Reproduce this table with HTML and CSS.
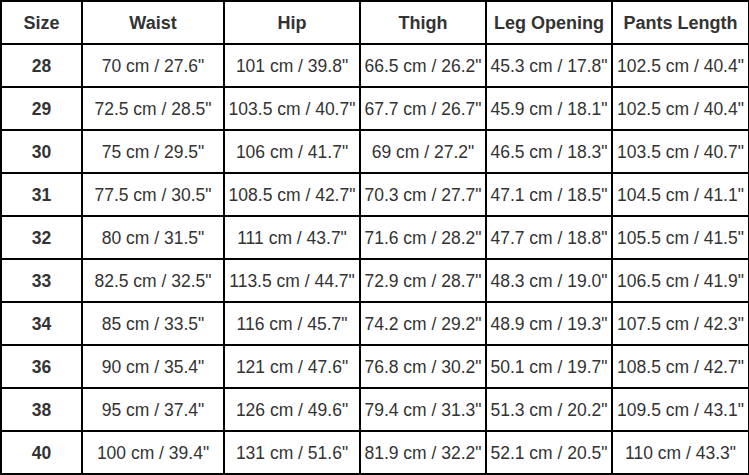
FILE: index.html
```html
<!DOCTYPE html>
<html>
<head>
<meta charset="utf-8">
<link rel="stylesheet" href="styles.css">
</head>
<body>
<table class="size-table">
  <colgroup>
    <col class="c1"><col class="c2"><col class="c3"><col class="c4"><col class="c5"><col class="c6">
  </colgroup>
  <thead>
    <tr><th>Size</th><th>Waist</th><th>Hip</th><th>Thigh</th><th>Leg Opening</th><th>Pants Length</th></tr>
  </thead>
  <tbody>
    <tr><th>28</th><td>70 cm / 27.6"</td><td>101 cm / 39.8"</td><td>66.5 cm / 26.2"</td><td>45.3 cm / 17.8"</td><td>102.5 cm / 40.4"</td></tr>
    <tr><th>29</th><td>72.5 cm / 28.5"</td><td>103.5 cm / 40.7"</td><td>67.7 cm / 26.7"</td><td>45.9 cm / 18.1"</td><td>102.5 cm / 40.4"</td></tr>
    <tr><th>30</th><td>75 cm / 29.5"</td><td>106 cm / 41.7"</td><td>69 cm / 27.2"</td><td>46.5 cm / 18.3"</td><td>103.5 cm / 40.7"</td></tr>
    <tr><th>31</th><td>77.5 cm / 30.5"</td><td>108.5 cm / 42.7"</td><td>70.3 cm / 27.7"</td><td>47.1 cm / 18.5"</td><td>104.5 cm / 41.1"</td></tr>
    <tr><th>32</th><td>80 cm / 31.5"</td><td>111 cm / 43.7"</td><td>71.6 cm / 28.2"</td><td>47.7 cm / 18.8"</td><td>105.5 cm / 41.5"</td></tr>
    <tr><th>33</th><td>82.5 cm / 32.5"</td><td>113.5 cm / 44.7"</td><td>72.9 cm / 28.7"</td><td>48.3 cm / 19.0"</td><td>106.5 cm / 41.9"</td></tr>
    <tr><th>34</th><td>85 cm / 33.5"</td><td>116 cm / 45.7"</td><td>74.2 cm / 29.2"</td><td>48.9 cm / 19.3"</td><td>107.5 cm / 42.3"</td></tr>
    <tr><th>36</th><td>90 cm / 35.4"</td><td>121 cm / 47.6"</td><td>76.8 cm / 30.2"</td><td>50.1 cm / 19.7"</td><td>108.5 cm / 42.7"</td></tr>
    <tr><th>38</th><td>95 cm / 37.4"</td><td>126 cm / 49.6"</td><td>79.4 cm / 31.3"</td><td>51.3 cm / 20.2"</td><td>109.5 cm / 43.1"</td></tr>
    <tr><th>40</th><td>100 cm / 39.4"</td><td>131 cm / 51.6"</td><td>81.9 cm / 32.2"</td><td>52.1 cm / 20.5"</td><td>110 cm / 43.3"</td></tr>
  </tbody>
</table>
</body>
</html>
```

FILE: styles.css
```css
html, body {
  margin: 0;
  padding: 0;
  background: #fff;
}

.size-table {
  border-collapse: collapse;
  table-layout: fixed;
  width: 748px;
  font-family: "Liberation Sans", Arial, sans-serif;
  color: #333;
}

.c1 { width: 81px; }
.c2 { width: 142px; }
.c3 { width: 136px; }
.c4 { width: 126px; }
.c5 { width: 126px; }
.c6 { width: 137px; }

.size-table th,
.size-table td {
  border: 2px solid #000;
  height: 43px;
  padding: 2px 0 0 0;
  text-align: center;
  vertical-align: middle;
  white-space: nowrap;
  box-sizing: border-box;
}

.size-table thead th {
  font-size: 18px;
  font-weight: bold;
}

.size-table tbody th {
  font-size: 17.5px;
  font-weight: bold;
}

.size-table td {
  font-size: 17.5px;
  font-weight: normal;
}
```
